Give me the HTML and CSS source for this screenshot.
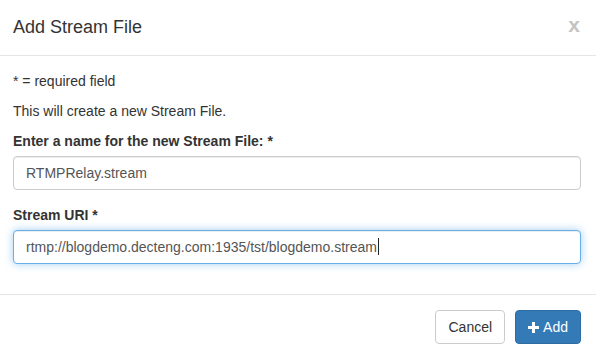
FILE: index.html
```html
<!DOCTYPE html>
<html>
<head>
<meta charset="utf-8">
<link rel="stylesheet" href="styles.css">
</head>
<body>
<div class="modal">
  <div class="modal-header">
    <h4 class="modal-title">Add Stream File</h4>
    <span class="close">x</span>
  </div>
  <div class="modal-body">
    <p>* = required field</p>
    <p>This will create a new Stream File.</p>
    <div class="form-group">
      <label>Enter a name for the new Stream File: *</label>
      <input class="form-control" type="text" value="RTMPRelay.stream">
    </div>
    <div class="form-group">
      <label>Stream URI *</label>
      <div class="form-control focused">rtmp://blogdemo.decteng.com:1935/tst/blogdemo.stream<span class="caret"></span></div>
    </div>
  </div>
  <div class="modal-footer">
    <button class="btn btn-default">Cancel</button>
    <button class="btn btn-primary"><svg class="plus" width="11" height="11" viewBox="0 0 11 11"><rect x="4" y="0" width="3" height="11" fill="#fff"/><rect x="0" y="4" width="11" height="3" fill="#fff"/></svg> Add</button>
  </div>
</div>
</body>
</html>
```

FILE: styles.css
```css
* { box-sizing: border-box; }
html, body { margin: 0; padding: 0; background: #fff; }
body {
  font-family: "Liberation Sans", Arial, sans-serif;
  font-size: 14px;
  line-height: 20px;
  color: #333;
}
.modal { width: 596px; }
.modal-header {
  display: flex;
  justify-content: space-between;
  align-items: flex-start;
  padding: 15px 15px 15px 13px;
  border-bottom: 1px solid #e5e5e5;
  height: 56px;
}
.modal-title {
  margin: 0;
  font-size: 18px;
  font-weight: normal;
  line-height: 25px;
}
.close {
  font-size: 21px;
  font-weight: bold;
  line-height: 20px;
  color: #c4c4c4;
  margin-right: 1px;
}
.modal-body {
  padding: 15px 15px 15px 13px;
}
.modal-body p { margin: 0 0 10px; }
.form-group { margin-bottom: 15px; display: flex; flex-direction: column; }
label {
  font-weight: bold;
  margin-bottom: 5px;
}
.form-control {
  display: block;
  width: 568px;
  height: 34px;
  padding: 6px 12px;
  font-family: inherit;
  font-size: 14px;
  line-height: 20px;
  color: #555;
  background: #fff;
  border: 1px solid #ccc;
  border-radius: 4px;
  box-shadow: inset 0 1px 1px rgba(0,0,0,.075);
  outline: none;
  margin: 0;
}
.focused {
  border-color: #66afe9;
  box-shadow: inset 0 1px 1px rgba(0,0,0,.075), 0 0 8px rgba(102,175,233,.6);
  white-space: nowrap;
}
.caret {
  display: inline-block;
  width: 1px;
  height: 17px;
  background: #222;
  vertical-align: -3px;
  margin-left: 1px;
}
.modal-footer {
  display: flex;
  justify-content: flex-end;
  gap: 10px;
  padding: 15px 15px 15px 15px;
  border-top: 1px solid #e5e5e5;
}
.btn {
  font-family: inherit;
  font-size: 14px;
  line-height: 20px;
  padding: 6px 12px;
  border: 1px solid transparent;
  border-radius: 4px;
  height: 34px;
  display: inline-flex;
  align-items: center;
}
.btn-default { background: #fff; color: #333; border-color: #ccc; }
.btn-primary { background: #337ab7; color: #fff; border-color: #2e6da4; }
.plus { margin-right: 4px; }
```
